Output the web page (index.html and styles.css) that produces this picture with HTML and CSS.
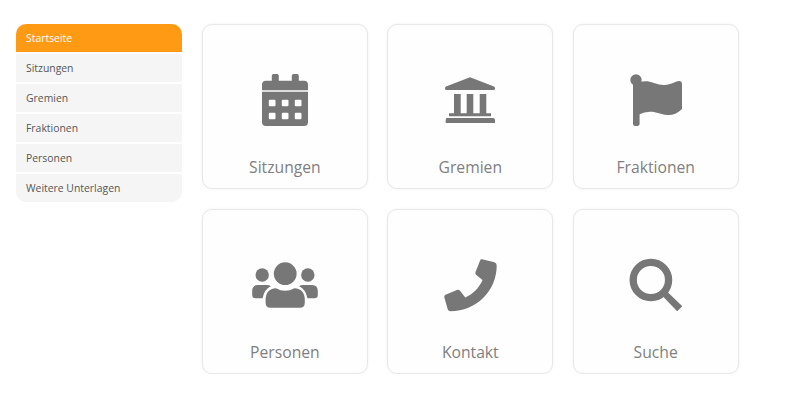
FILE: index.html
```html
<!DOCTYPE html>
<html lang="de">
<head>
    <meta charset="UTF-8">
    <meta name="viewport" content="width=device-width, initial-scale=1.0">
    <title>Startseite</title>
    <link rel="stylesheet" href="styles.css">
</head>
<body>
    <div class="top-bar"></div>
    <div class="container">
        <nav class="side-menu">
            <a class="side-item active" href="#">Startseite</a>
            <a class="side-item" href="#">Sitzungen</a>
            <a class="side-item" href="#">Gremien</a>
            <a class="side-item" href="#">Fraktionen</a>
            <a class="side-item" href="#">Personen</a>
            <a class="side-item" href="#">Weitere Unterlagen</a>
        </nav>
        <div class="tiles">
            <a class="tile" href="#">
                <svg class="tile-icon" viewBox="0 0 70 70">
                    <path fill-rule="evenodd" d="M23.5 9h3.6q1.7 0 1.7 1.700v5h13v-5q0-1.700 1.700-1.700h3.600q1.700 0 1.700 1.700v5h5.200q4 0 4 4v5.600h-46v-5.600q0-4 4-4h5.800v-5q0-1.700 1.700-1.700zM12 26.700h46v30.300q0 4-4 4h-38q-4 0-4-4zM19.800 34.700q-1 0-1 1v4.600q0 1 1 1h4.700q1 0 1-1v-4.600q0-1-1-1zM32.800 34.700q-1 0-1 1v4.600q0 1 1 1h4.700q1 0 1-1v-4.600q0-1-1-1zM45.800 34.700q-1 0-1 1v4.600q0 1 1 1h4.700q1 0 1-1v-4.600q0-1-1-1zM19.800 47.700q-1 0-1 1v4.600q0 1 1 1h4.700q1 0 1-1v-4.600q0-1-1-1zM32.800 47.700q-1 0-1 1v4.600q0 1 1 1h4.700q1 0 1-1v-4.600q0-1-1-1zM45.800 47.700q-1 0-1 1v4.600q0 1 1 1h4.700q1 0 1-1v-4.600q0-1-1-1z"/>
                </svg>
                <span class="tile-label">Sitzungen</span>
            </a>
            <a class="tile" href="#">
                <svg class="tile-icon" viewBox="0 0 70 70">
                    <path d="M35 12.300L59 21.500q1 .5 1 1.500v.5q0 1.500-1.500 1.500h-47q-1.500 0-1.500-1.500v-.5q0-1 1-1.500z"/>
                    <path d="M19 29h6.700v19.300h-6.700zM31.700 29h6.600v19.300h-6.600zM44.700 29h6.600v19.300h-6.600zM14 48.300h42v3h-42zM12 53h46q2 0 2 2v3h-49.300v-3q0-2 1.300-2z"/>
                </svg>
                <span class="tile-label">Gremien</span>
            </a>
            <a class="tile" href="#">
                <svg class="tile-icon" viewBox="0 0 70 70">
                    <circle cx="15" cy="15" r="5.700"/>
                    <path d="M12 15h6.600v43.700q0 2.300-3.300 2.300t-3.300-2.300z"/>
                    <path d="M18 17C24 15.500 28 16 33 18C41 21 48 20.500 55 16.800Q61 14.500 61 19.500V44C56 49 51 50.500 46 50C40 49.500 36 46.700 29 46.700Q23 47 18 49.500z"/>
                </svg>
                <span class="tile-label">Fraktionen</span>
            </a>
            <a class="tile" href="#">
                <svg class="tile-icon" viewBox="0 0 70 70">
                    <circle cx="35.200" cy="23.700" r="11.400"/>
                    <circle cx="12.200" cy="25" r="6.700"/>
                    <circle cx="57.800" cy="25" r="6.700"/>
                    <path d="M8 35h9q2.500 0 3.800 1.200Q14 39.500 12.600 48.300H5.500q-3.300 0-3.300-3.300v-4q0-6 5.800-6z"/>
                    <path d="M62 35h-9q-2.500 0-3.800 1.200Q56 39.500 57.400 48.300h7.100q3.300 0 3.300-3.300v-4q0-6-5.800-6z"/>
                    <path d="M26 38.300q4.500 2.500 9.200 2.500t9.200-2.500q10.400.7 10.400 12v2.400q0 5-5 5h-29.200q-5 0-5-5v-2.400q0-11.300 10.400-12z"/>
                </svg>
                <span class="tile-label">Personen</span>
            </a>
            <a class="tile" href="#">
                <svg class="tile-icon" viewBox="0 0 70 70">
                    <path d="M47 9.300L59.500 12.300Q61.700 13 61.700 15.500C61.700 41 41 61.300 15.500 61.300Q13.300 61.300 12.700 59.300L9.300 47.300Q9 45.500 10.500 44.800L22 40Q23.800 39.500 25 40.700L30.300 47.500C38 44 44 38 47.500 30L41 24.700Q40 23.500 40.500 22L45 10.700Q45.500 9 47 9.300z"/>
                </svg>
                <span class="tile-label">Kontakt</span>
            </a>
            <a class="tile" href="#">
                <svg class="tile-icon" viewBox="0 0 70 70">
                    <circle class="lens" cx="29.900" cy="30" r="17.700"/>
                    <path class="handle" d="M46.500 43L60.300 56.200L56.200 60.300L43 46.500z"/>
                </svg>
                <span class="tile-label">Suche</span>
            </a>
        </div>
    </div>
</body>
</html>
```

FILE: styles.css
```css
body {
    font-family: "Open Sans", "Liberation Sans", sans-serif;
    margin: 0;
    background-color: #fff;
}
a {
    text-decoration: none;
}
.top-bar {
    height: 0;
    box-shadow: 0 0 4px rgba(0, 0, 0, 0.2);
}
.container {
    display: flex;
    align-items: flex-start;
    gap: 20px;
    padding: 24px 0 0 16px;
}
.side-menu {
    display: flex;
    flex-direction: column;
    gap: 2px;
    width: 166px;
    border-radius: 10px;
    overflow: hidden;
}
.side-item {
    height: 28px;
    line-height: 28px;
    padding-left: 10px;
    font-size: 10.4px;
    color: #555;
    background-color: #f5f5f5;
}
.side-item.active {
    color: #fff;
    background-color: #ff9a14;
}
.tiles {
    display: grid;
    grid-template-columns: repeat(3, 165.8px);
    grid-auto-rows: 165px;
    column-gap: 19.6px;
    row-gap: 20px;
}
.tile {
    display: flex;
    flex-direction: column;
    align-items: center;
    box-sizing: border-box;
    padding-top: 40px;
    background-color: #fefefe;
    border: 1px solid #e8e8e8;
    border-radius: 10px;
    box-shadow: 0 0 3px rgba(0, 0, 0, 0.06);
}
.tile-icon {
    width: 70px;
    height: 70px;
    fill: #777;
}
.tile-label {
    margin-top: 20px;
    font-size: 15.7px;
    line-height: 24px;
    color: #808080;
}
.lens {
    fill: none;
    stroke: #777;
    stroke-width: 7.3;
}
.handle {
    stroke: #777;
    stroke-width: 1.5;
    stroke-linejoin: round;
}
```
